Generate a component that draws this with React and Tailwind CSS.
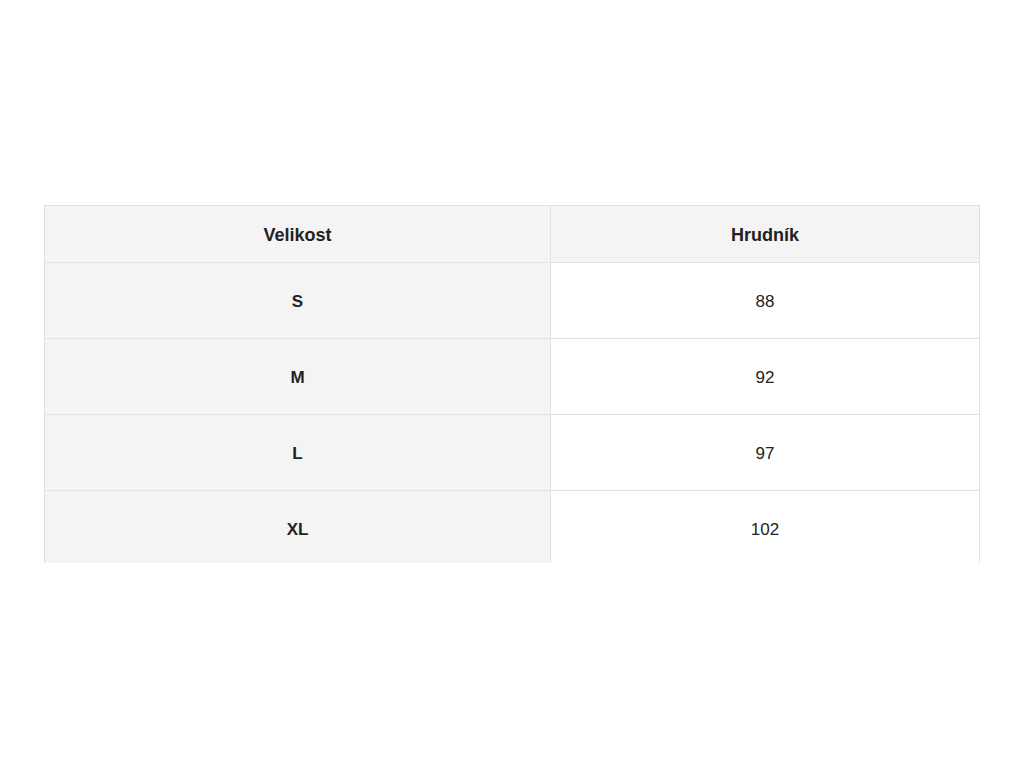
import React from 'react'

const rows = [
  ['S', '88'],
  ['M', '92'],
  ['L', '97'],
  ['XL', '102'],
]

export default function App() {
  return (
    <div className="min-h-screen bg-white px-[44px] pt-[205px] font-['Liberation_Sans',Arial,sans-serif] text-[#222]">
      {/* table is clipped at the bottom, like in the shop page */}
      <div className="h-[358px] overflow-hidden">
        <table className="w-full border-collapse text-[17px]">
          <thead>
            <tr className="bg-[#f4f4f4]">
              <th className="h-[57px] w-[506px] border border-[#e2e2e2] pt-[2px] text-[18px] font-bold">Velikost</th>
              <th className="h-[57px] border border-[#e2e2e2] pt-[2px] text-[18px] font-bold">Hrudník</th>
            </tr>
          </thead>
          <tbody>
            {rows.map(([size, chest]) => (
              <tr key={size}>
                <td className="h-[76px] border border-[#e2e2e2] bg-[#f4f4f4] pt-[2px] text-center font-bold">{size}</td>
                <td className="h-[76px] border border-[#e2e2e2] pt-[2px] text-center">{chest}</td>
              </tr>
            ))}
          </tbody>
        </table>
      </div>
    </div>
  )
}
